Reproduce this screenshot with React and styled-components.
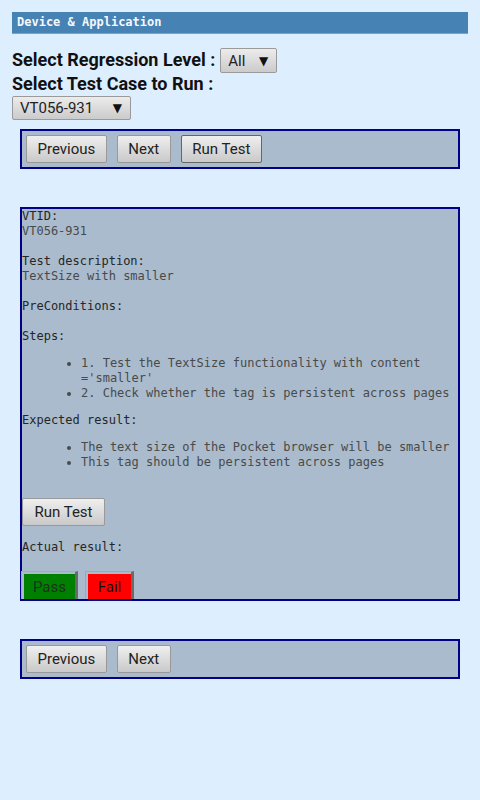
import React from "react";
import styled, { createGlobalStyle } from "styled-components";

const steps = [
    "1. Test the TextSize functionality with content ='smaller'",
    "2. Check whether the tag is persistent across pages",
];
const expected = [
    "The text size of the Pocket browser will be smaller",
    "This tag should be persistent across pages",
];

const App = () => {
    return (
        <Page>
            <GlobalStyle />
            <Header>Device &amp; Application</Header>
            <SelectRow>
                <Label>Select Regression Level :</Label>
                <Select width={57}>
                    <span>All</span>
                    <Arrow>▼</Arrow>
                </Select>
            </SelectRow>
            <Label as="div">Select Test Case to Run :</Label>
            <Select width={119} block>
                <span>VT056-931</span>
                <Arrow>▼</Arrow>
            </Select>
            <NavBox>
                <Button>Previous</Button>
                <Button>Next</Button>
                <Button focused>Run Test</Button>
            </NavBox>
            <Details>
                <Key>VTID:</Key>
                <Value>VT056-931</Value>
                <Blank />
                <Key>Test description:</Key>
                <Value>TextSize with smaller</Value>
                <Blank />
                <Key>PreConditions:</Key>
                <Blank />
                <Key>Steps:</Key>
                <List>
                    {steps.map((s) => (
                        <li key={s}>{s}</li>
                    ))}
                </List>
                <Key>Expected result:</Key>
                <List>
                    {expected.map((s) => (
                        <li key={s}>{s}</li>
                    ))}
                </List>
                <RunButton>Run Test</RunButton>
                <Key>Actual result:</Key>
                <ResultRow>
                    <ResultButton fill="#008000" light="#8fbf8f" ink="#1c331c" width={57}>
                        Pass
                    </ResultButton>
                    <ResultButton fill="#ff0000" light="#e88a8a" ink="#111" width={49}>
                        Fail
                    </ResultButton>
                </ResultRow>
            </Details>
            <NavBox bottom>
                <Button>Previous</Button>
                <Button>Next</Button>
            </NavBox>
        </Page>
    );
};

export default App;

const GlobalStyle = createGlobalStyle`
    html, body {
        margin: 0;
        padding: 0;
        background: #ddeeff;
    }
    body {
        font-family: Roboto, "Liberation Sans", sans-serif;
    }
`;
const Page = styled.div`
    padding: 12px;
    min-height: 800px;
    box-sizing: border-box;
    background: #ddeeff;
`;
const Header = styled.div`
    height: 21px;
    line-height: 21px;
    background: #4682b4;
    border-bottom: 1px solid #78a4c8;
    padding-left: 5px;
    color: #f4f8fc;
    font-family: "DejaVu Sans Mono", monospace;
    font-size: 12px;
    font-weight: bold;
`;
const SelectRow = styled.div`
    display: flex;
    align-items: baseline;
    gap: 5px;
    margin-top: 14px;
    height: 25px;
`;
const Label = styled.span`
    font-size: 18px;
    font-weight: bold;
    color: #111;
    line-height: 22px;
`;
const Select = styled.div`
    display: ${(p) => (p.block ? "flex" : "inline-flex")};
    align-items: center;
    justify-content: space-between;
    box-sizing: border-box;
    width: ${(p) => p.width}px;
    height: ${(p) => (p.block ? 24 : 25)}px;
    margin-top: ${(p) => (p.block ? 1 : 0)}px;
    padding: 0 8px 0 7px;
    border: 1px solid #9a9a9a;
    border-radius: 2px;
    background: linear-gradient(#ececec, #cbcbcb);
    font-size: 15px;
    color: #222;
`;
const Arrow = styled.span`
    font-family: "DejaVu Sans", sans-serif;
    font-size: 12px;
    color: #111;
`;
const NavBox = styled.div`
    display: flex;
    gap: 10px;
    box-sizing: border-box;
    height: 40px;
    margin: ${(p) => (p.bottom ? "38px 8px 0" : "9px 8px 0")};
    padding: 4px;
    background: #a9bbcc;
    border: 2px solid #00008b;
`;
const Button = styled.button`
    height: 28px;
    padding: 0 10.5px;
    border: ${(p) => (p.focused ? "1px solid #666" : "1px solid #999")};
    border-radius: 2px;
    background: linear-gradient(#efefef, #c9c9c9);
    font-family: Roboto, sans-serif;
    font-size: 15px;
    color: #222;
`;
const Details = styled.div`
    margin: 38px 8px 0;
    border: 2px solid #00008b;
    background: #a9bbcc;
    font-family: "DejaVu Sans Mono", monospace;
    font-size: 12px;
    line-height: 15px;
    color: #444;
`;
const Key = styled.div`
    color: #262626;
`;
const Value = styled.div`
    color: #4a4a4a;
`;
const Blank = styled.div`
    height: 15px;
`;
const List = styled.ul`
    margin: 12px 0;
    padding-left: 59px;
    color: #4a4a4a;
`;
const RunButton = styled(Button)`
    display: block;
    margin: 28px 0 14px;
    width: 83px;
    padding: 0;
`;
const ResultRow = styled.div`
    display: flex;
    gap: 7px;
    margin-top: 16px;
    margin-left: -1px;
    height: 28px;
    overflow: hidden;
`;
const ResultButton = styled.button`
    box-sizing: border-box;
    width: ${(p) => p.width}px;
    height: 31px;
    padding: 2px 0 0 2px;
    border-style: solid;
    border-width: 1px 3px 3px 1px;
    border-color: ${(p) => p.light} #6a6a6a #6a6a6a ${(p) => p.light};
    background: ${(p) => p.fill};
    background-clip: content-box;
    font-family: Roboto, sans-serif;
    font-size: 15px;
    color: ${(p) => p.ink};
`;
